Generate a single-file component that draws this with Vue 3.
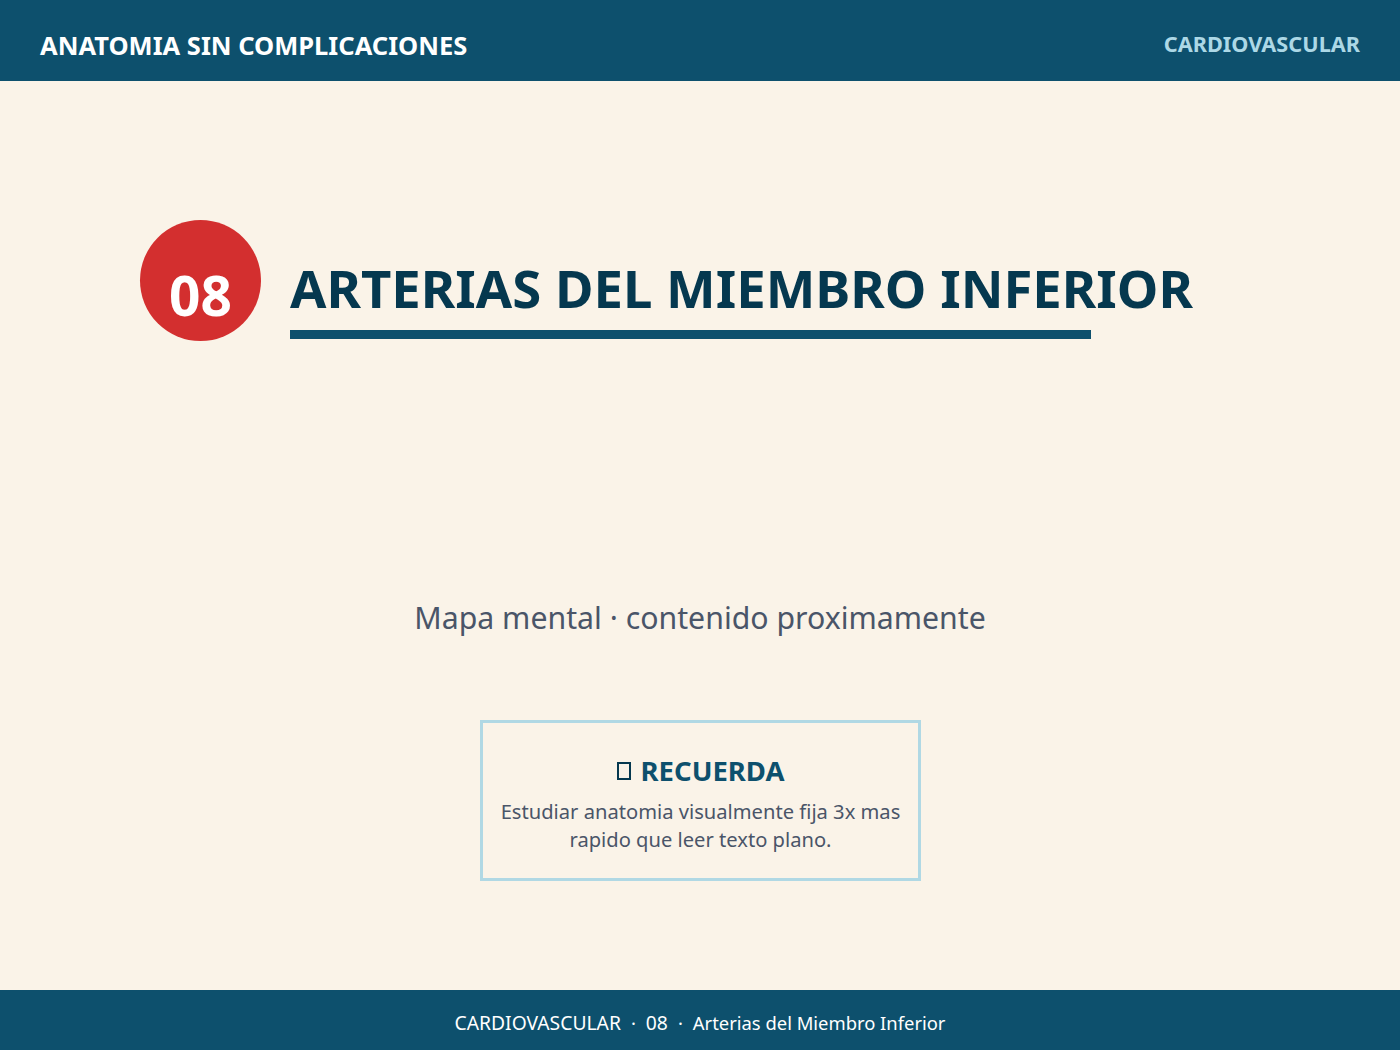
<template>
  <div class="page">
    <header class="topbar">
      <span class="brand">ANATOMIA SIN COMPLICACIONES</span>
      <span class="section">CARDIOVASCULAR</span>
    </header>

    <main class="content">
      <div class="heading">
        <div class="badge">08</div>
        <div class="title-wrap">
          <h1 class="title">ARTERIAS DEL MIEMBRO INFERIOR</h1>
          <div class="rule"></div>
        </div>
      </div>

      <p class="placeholder">Mapa mental · contenido proximamente</p>

      <div class="note">
        <div class="note-title"><span class="tofu"></span>RECUERDA</div>
        <p class="note-text">Estudiar anatomia visualmente fija 3x mas rapido que leer texto plano.</p>
      </div>
    </main>

    <footer class="footer">
      <span class="footer-upper">CARDIOVASCULAR</span>
      <span>·</span>
      <span class="footer-upper">08</span>
      <span>·</span>
      <span>Arterias del Miembro Inferior</span>
    </footer>
  </div>
</template>

<script setup>
</script>

<style>
html,
body {
  margin: 0;
  background: #faf3e8;
}
</style>

<style scoped>
.page {
  width: 1400px;
  height: 1050px;
  display: flex;
  flex-direction: column;
  background: #faf3e8;
  font-family: "Noto Sans", "Open Sans", sans-serif;
}
.topbar {
  height: 81px;
  flex: none;
  display: flex;
  align-items: center;
  justify-content: space-between;
  padding: 0 40px;
  background: #0d506d;
}
.brand {
  font-size: 25.5px;
  font-weight: 700;
  color: #fff;
  padding-top: 9px;
}
.section {
  font-size: 21.7px;
  font-weight: 700;
  color: #acd8e6;
  padding-top: 6px;
}
.content {
  flex: 1;
  display: flex;
  flex-direction: column;
  align-items: center;
  padding: 139px 140px 0;
}
.heading {
  align-self: flex-start;
  display: flex;
  gap: 29px;
}
.badge {
  width: 121px;
  height: 121px;
  border-radius: 50%;
  background: #d32f2f;
  color: #fff;
  font-size: 55px;
  font-weight: 700;
  display: flex;
  align-items: center;
  justify-content: center;
  padding-top: 27px;
  box-sizing: border-box;
}
.title-wrap {
  padding-top: 35px;
}
.title {
  margin: 0;
  font-size: 52.65px;
  line-height: 66px;
  font-weight: 700;
  color: #05384f;
  white-space: nowrap;
}
.rule {
  width: 801px;
  height: 9px;
  margin-top: 9px;
  background: #0d506d;
}
.placeholder {
  margin: 255px 0 0;
  font-size: 30.25px;
  line-height: 44px;
  color: #4a5568;
}
.note {
  width: 441px;
  height: 161px;
  box-sizing: border-box;
  margin: 80px 0 0 1px;
  padding: 30px 16px 0;
  border: 3px solid #b0d8e4;
  text-align: center;
}
.note-title {
  font-size: 27.5px;
  line-height: 36px;
  font-weight: 700;
  color: #0d506d;
  display: flex;
  align-items: center;
  justify-content: center;
}
.tofu {
  width: 10px;
  height: 14px;
  border: 2px solid #05384f;
  margin-right: 10px;
}
.note-text {
  margin: 8px 0 0;
  font-size: 20.15px;
  line-height: 28px;
  color: #4a5568;
}
.footer {
  height: 60px;
  flex: none;
  box-sizing: border-box;
  padding-top: 4px;
  display: flex;
  gap: 10px;
  align-items: center;
  justify-content: center;
  background: #0d506d;
  color: #fff;
  font-size: 18.4px;
}
.footer-upper {
  font-size: 19.3px;
}
</style>
